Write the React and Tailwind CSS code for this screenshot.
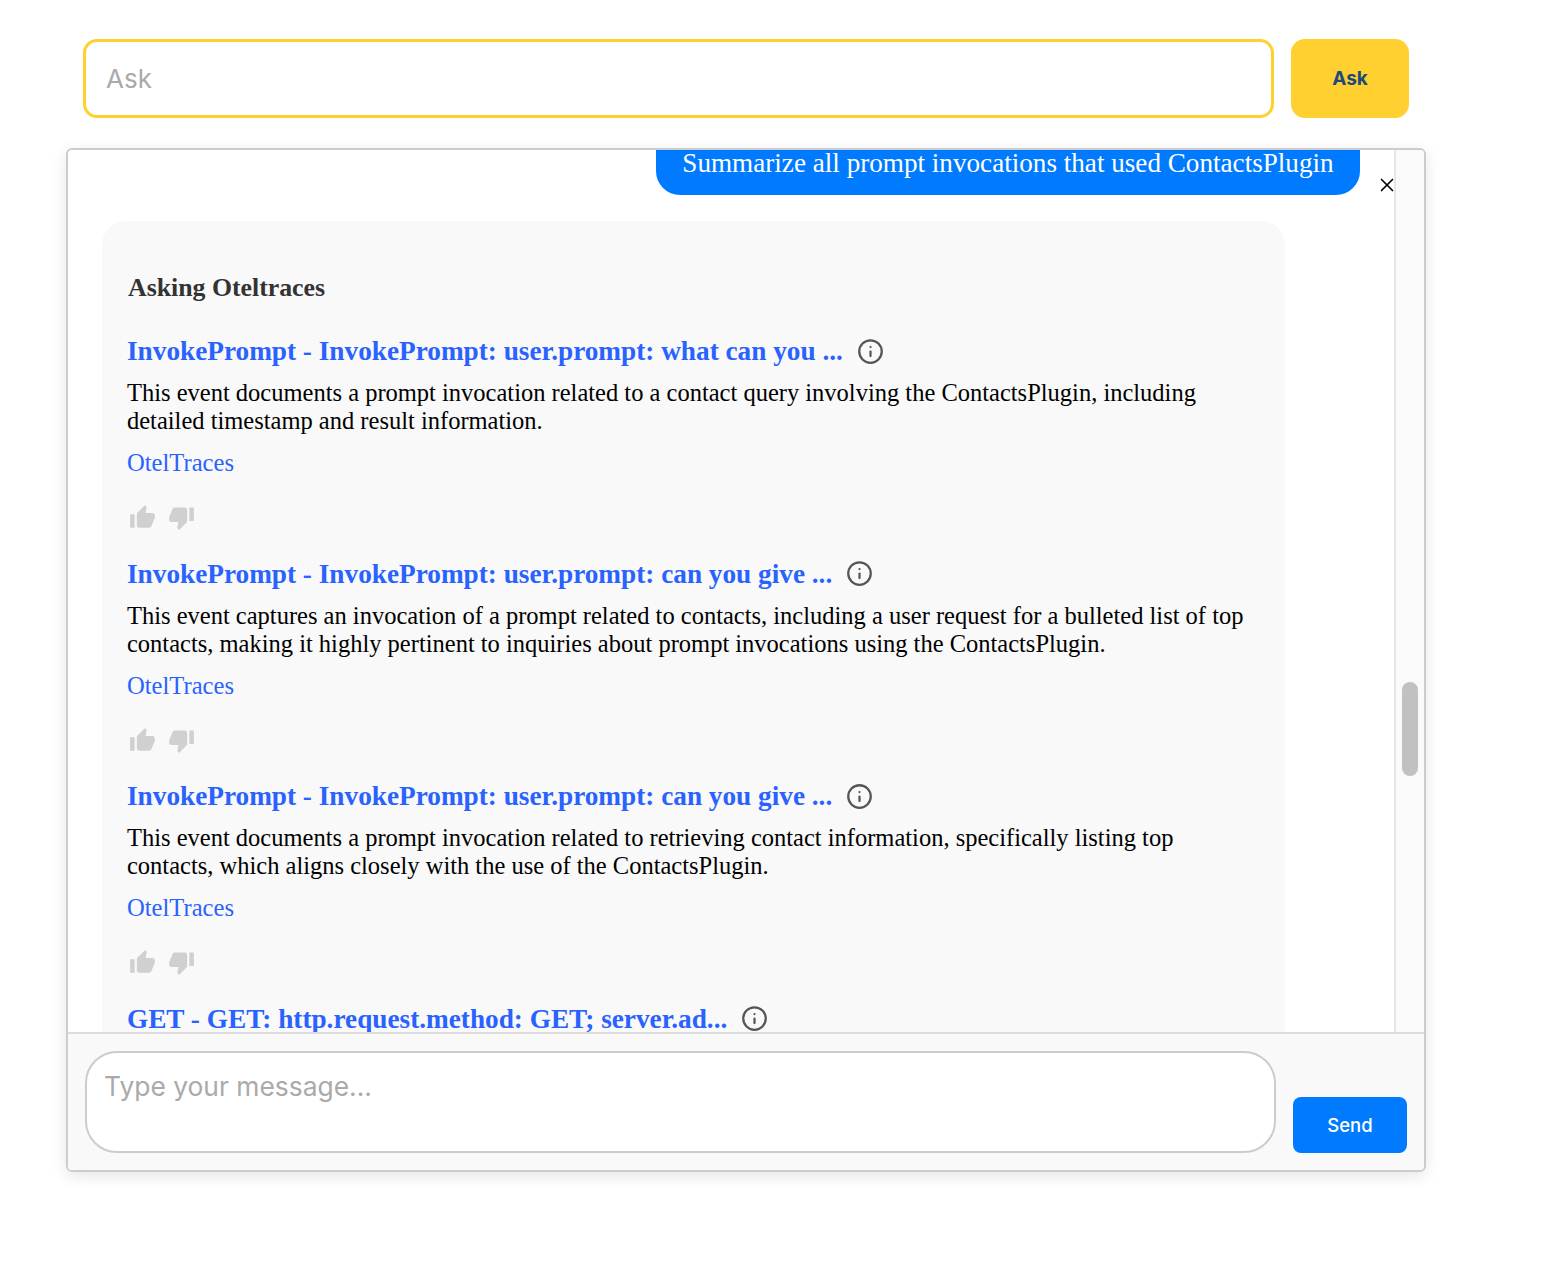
import React from 'react';
import { MdThumbUp, MdThumbDown } from 'react-icons/md';
import { Info, X } from 'lucide-react';

const results = [
  {
    title: 'InvokePrompt - InvokePrompt: user.prompt: what can you ...',
    summary:
      'This event documents a prompt invocation related to a contact query involving the ContactsPlugin, including detailed timestamp and result information.',
  },
  {
    title: 'InvokePrompt - InvokePrompt: user.prompt: can you give ...',
    summary:
      'This event captures an invocation of a prompt related to contacts, including a user request for a bulleted list of top contacts, making it highly pertinent to inquiries about prompt invocations using the ContactsPlugin.',
  },
  {
    title: 'InvokePrompt - InvokePrompt: user.prompt: can you give ...',
    summary:
      'This event documents a prompt invocation related to retrieving contact information, specifically listing top contacts, which aligns closely with the use of the ContactsPlugin.',
  },
];

const ResultTitle = ({ title }) => (
  <div className="flex items-center h-[30px]">
    <a className="text-[27.25px] leading-[30px] font-bold text-[#2962ff]">{title}</a>
    <Info size={27} strokeWidth={2} className="ml-[14px] text-[#555555]" />
  </div>
);

const Result = ({ title, summary }) => (
  <div className="h-[222.6px]">
    <ResultTitle title={title} />
    <p className="mt-[13px] text-[24.5px] leading-[28px] text-black">{summary}</p>
    <a className="block mt-[14px] text-[24.6px] leading-[28px] text-[#2962ff]">OtelTraces</a>
    <div className="flex items-center gap-[12px] mt-[27px] ml-[2px] text-[#d0d0d0]">
      <MdThumbUp size={27} />
      <MdThumbDown size={27} />
    </div>
  </div>
);

const App = () => {
  return (
    <div className="w-[1550px] h-[1288px] bg-white font-['Liberation_Serif',serif]">
      <div className="flex pt-[39px] pl-[83px] gap-[17px] font-['Inter',sans-serif]">
        <input
          placeholder="Ask"
          className="w-[1191px] h-[79px] px-[20px] text-[26px] bg-white border-[3px] border-[#ffd02f] rounded-[14px] outline-none placeholder:text-[#aaaaaa]"
        />
        <button className="w-[118px] h-[79px] pt-[2px] rounded-[14px] bg-[#ffd02f] text-[19px] font-bold text-[#1d4a7a]">Ask</button>
      </div>

      <div className="ml-[66px] mt-[30px] w-[1360px] h-[1024px] border-2 border-[#cccccc] rounded-[6px] shadow-[0_4px_16px_rgba(0,0,0,0.1)] overflow-hidden flex flex-col">
        <div className="flex h-[882px] overflow-hidden">
          <div className="w-[1326px] overflow-hidden">
            <div className="flex items-end justify-end">
              <div className="h-[45px] w-[704px] flex items-start justify-center bg-[#007bff] rounded-b-[24px] text-white text-[27.15px] leading-[26px]">
                Summarize all prompt invocations that used ContactsPlugin
              </div>
              <X size={22} strokeWidth={1.8} className="ml-[16px] mr-[-4px] mb-[-1px] text-black" />
            </div>
            <div className="ml-[34px] mt-[26px] w-[1183px] h-[900px] pl-[25px] pt-[51px] pr-[26px] bg-[#f9f9f9] rounded-t-[24px]">
              <h3 className="ml-[1px] text-[25.8px] leading-[32px] font-bold text-[#333333]">Asking Oteltraces</h3>
              <div className="mt-[32px]">
                {results.map((r, i) => (
                  <Result key={i} title={r.title} summary={r.summary} />
                ))}
                <ResultTitle title="GET - GET: http.request.method: GET; server.ad..." />
              </div>
            </div>
          </div>
          <div className="w-[30px] bg-[#fafafa] border-l-2 border-[#e6e6e6] pl-[6px]">
            <div className="mt-[532px] w-[16px] h-[94px] rounded-[8px] bg-[#c1c1c1]"></div>
          </div>
        </div>

        <div className="flex-1 flex items-end gap-[17px] pl-[17px] pb-[17px] bg-[#f9f9f9] border-t-2 border-[#dddddd] font-['Inter',sans-serif]">
          <textarea
            placeholder="Type your message..."
            className="w-[1191px] h-[102px] px-[17px] pt-[15px] pb-[16px] text-[26.4px] leading-[36px] bg-white border-2 border-[#cccccc] rounded-[32px] outline-none resize-none placeholder:text-[#aaaaaa]"
          />
          <button className="w-[114px] h-[56px] pt-[2px] rounded-[8px] bg-[#007bff] text-[18.5px] font-medium text-white">Send</button>
        </div>
      </div>
    </div>
  );
};

export default App;
